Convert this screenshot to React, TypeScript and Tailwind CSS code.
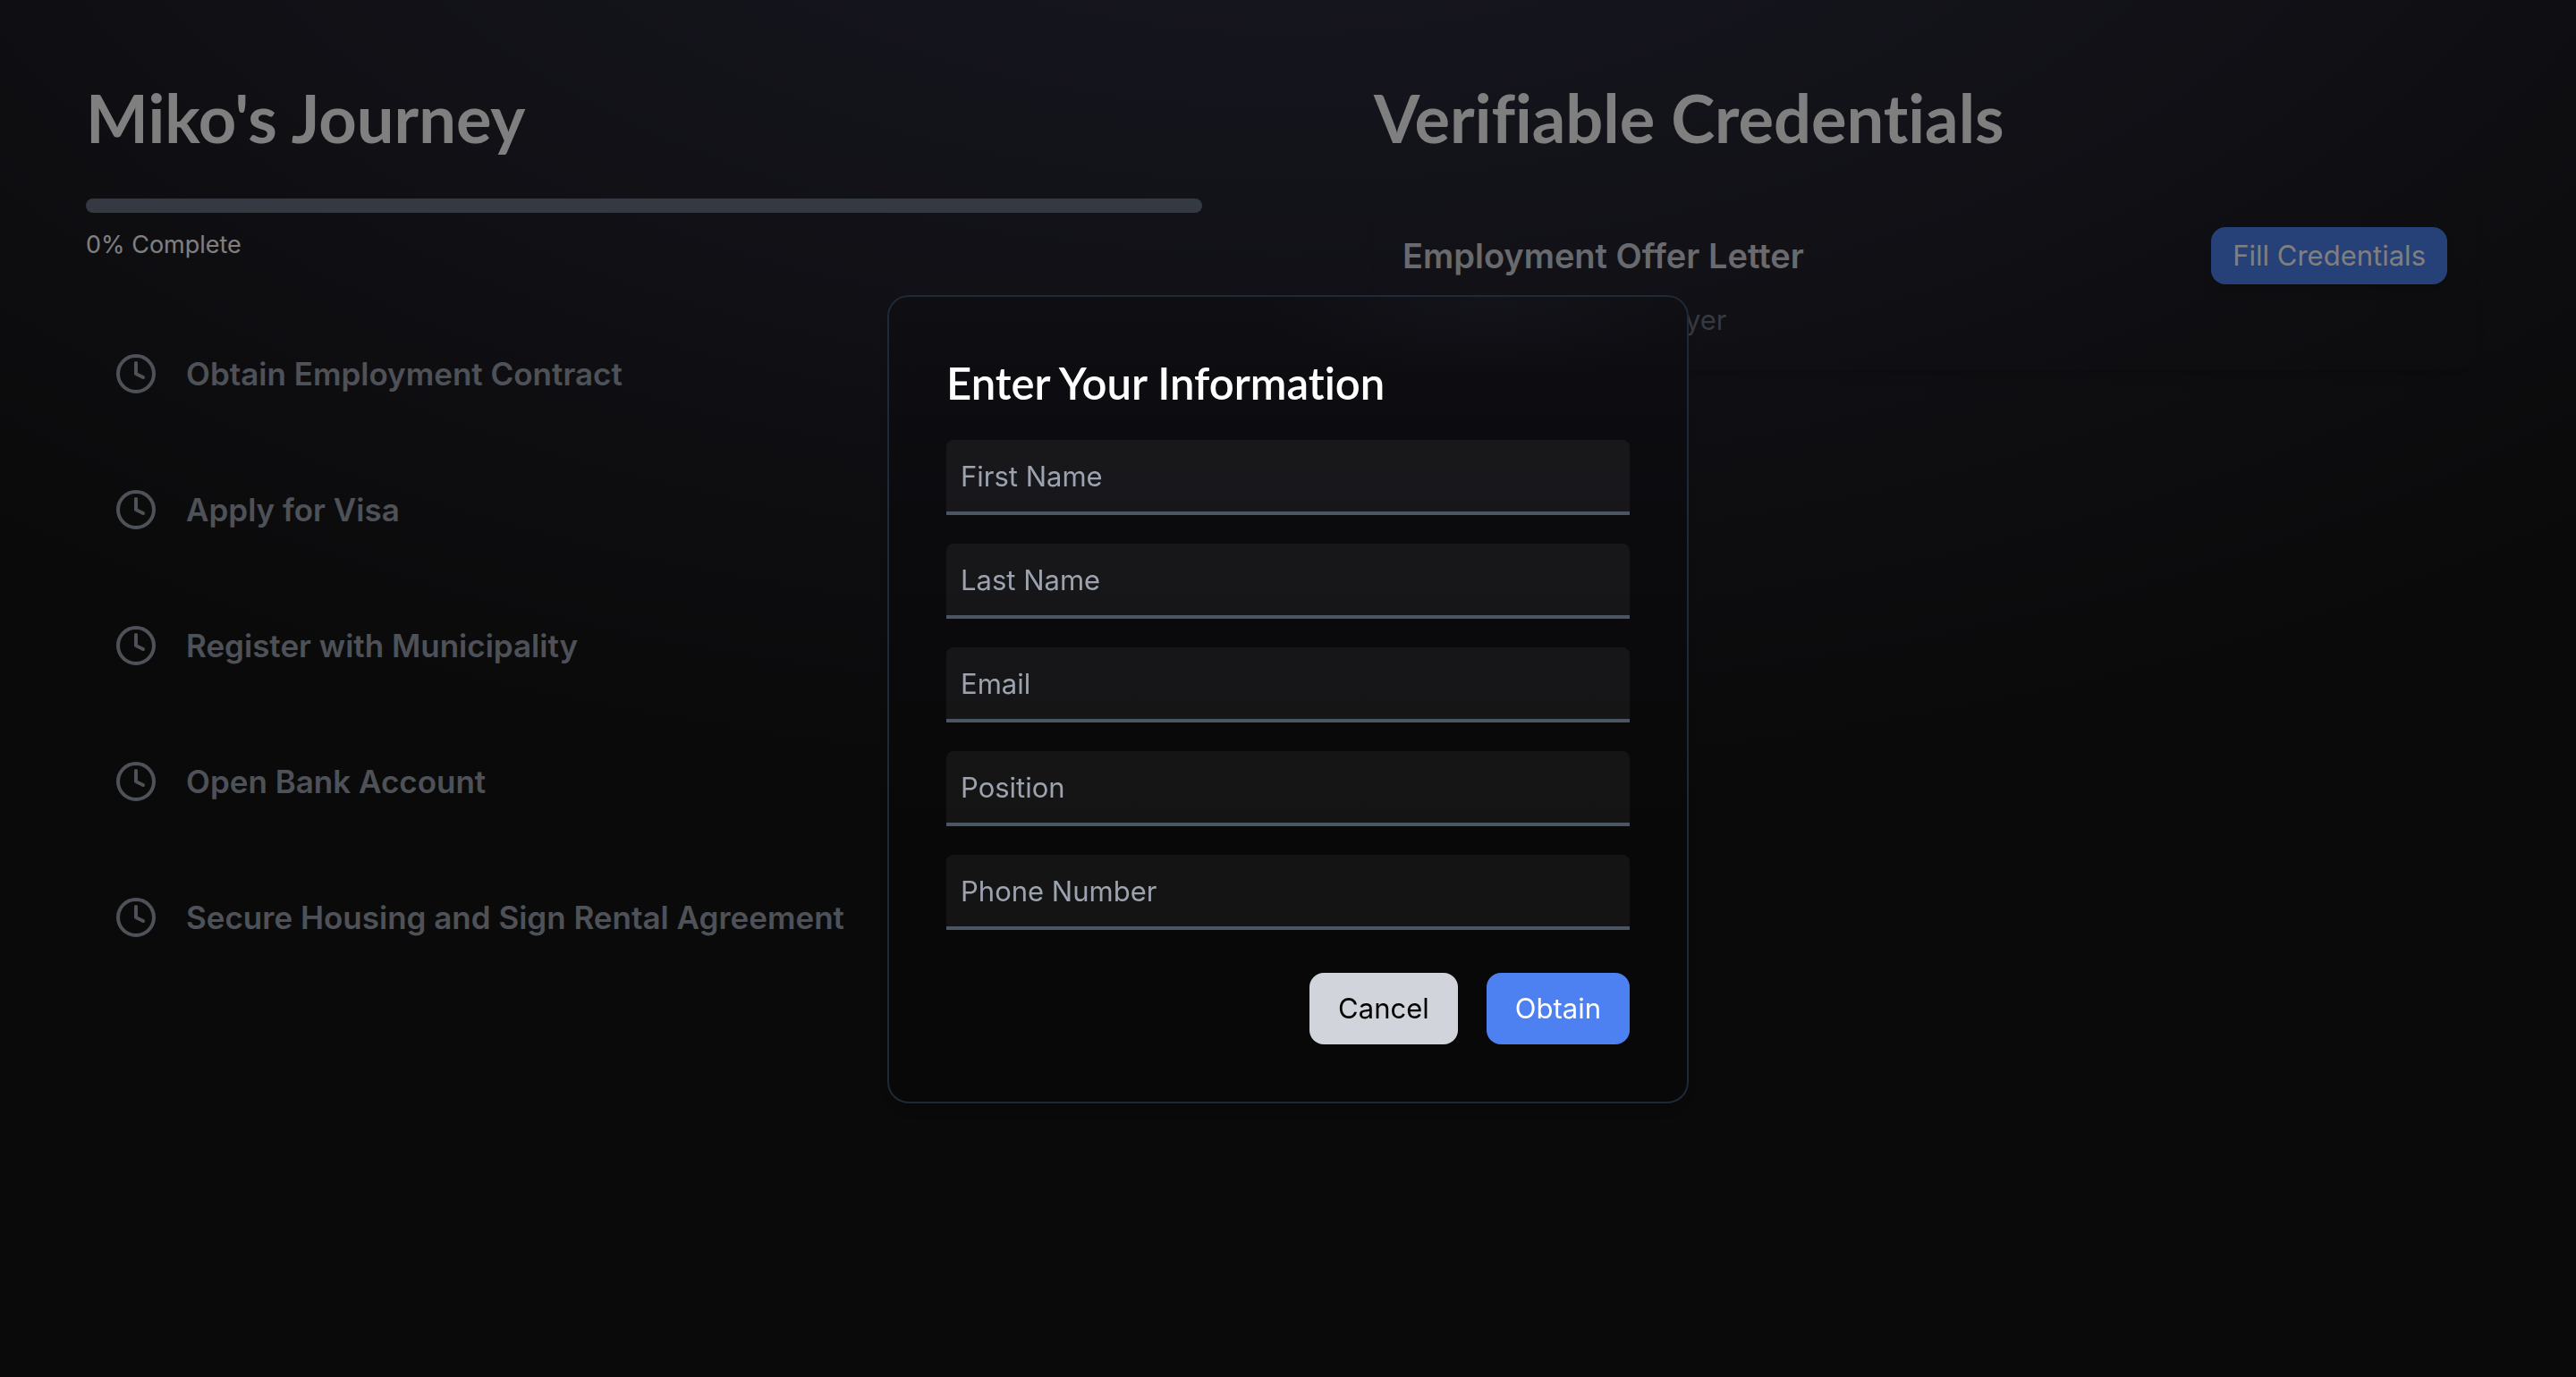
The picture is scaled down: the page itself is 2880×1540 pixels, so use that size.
import { Clock } from 'lucide-react'

const steps = [
  'Obtain Employment Contract',
  'Apply for Visa',
  'Register with Municipality',
  'Open Bank Account',
  'Secure Housing and Sign Rental Agreement',
]

const fields = [
  { id: 'firstName', label: 'First Name', type: 'text' },
  { id: 'lastName', label: 'Last Name', type: 'text' },
  { id: 'email', label: 'Email', type: 'email' },
  { id: 'position', label: 'Position', type: 'text' },
  { id: 'phone', label: 'Phone Number', type: 'tel' },
]

const progress = 0

const PageTitle = ({ children }: { children: string }) => (
  <h1 className="font-['Lato',sans-serif] text-[74px] leading-[72px] font-bold text-white [font-variant-ligatures:none]">
    {children}
  </h1>
)

const Journey = () => (
  <section className="p-24">
    <PageTitle>Miko's Journey</PageTitle>
    <div className="mt-[54px] h-4 overflow-hidden rounded-full bg-gray-500">
      <div className="h-full bg-[#4d80f0]" style={{ width: `${progress}%` }} />
    </div>
    <p className="mt-4 text-[27px] leading-10 text-white">{progress}% Complete</p>
    <ul className="mt-12 grid">
      {steps.map((step) => (
        <li key={step} className="flex h-[152px] items-center gap-8 px-8 text-[#9ca3af]">
          <Clock className="size-12 shrink-0" />
          <span className="text-[35px] leading-[56px] font-semibold">{step}</span>
        </li>
      ))}
    </ul>
  </section>
)

const Credentials = () => (
  <section className="p-24">
    <PageTitle>Verifiable Credentials</PageTitle>
    <div className="mt-[54px] mr-4 rounded-3xl p-8 shadow-lg">
      <div className="flex items-center justify-between">
        <h2 className="text-[38px] leading-[56px] font-semibold text-[#d1d5db]">Employment Offer Letter</h2>
        <button type="button" className="h-16 rounded-2xl bg-[#4d80f0] px-6 text-[31px] text-white shadow-lg">
          Fill Credentials
        </button>
      </div>
      <p className="mt-4 text-[31px] leading-[48px] text-gray-500">Issued by Your Employer</p>
    </div>
  </section>
)

const InfoDialog = () => (
  <div className="fixed inset-0 flex items-center justify-center bg-black/50 pt-6">
    <form
      role="dialog"
      aria-labelledby="dialog-title"
      className="w-full max-w-4xl rounded-3xl border-2 border-[#1f2937] bg-[#080808] bg-[radial-gradient(ellipse_30%_10%_at_75%_0%,rgba(120,130,150,0.05),transparent),linear-gradient(#0e0e13,#0b0b0e_30%,#080808_70%)] p-16 shadow-lg"
    >
      <h2
        id="dialog-title"
        className="mb-8 font-['Lato',sans-serif] text-[49px] leading-[64px] font-semibold text-white [font-variant-ligatures:none]"
      >
        Enter Your Information
      </h2>
      <div className="grid gap-8">
        {fields.map(({ id, label, type }) => (
          <input
            key={id}
            id={id}
            type={type}
            placeholder={label}
            aria-label={label}
            className="h-[84px] w-full rounded-t-lg border-b-4 border-[#4b5563] bg-white/5 px-4 text-[31px] text-white outline-none placeholder:text-[#9ca3af]"
          />
        ))}
      </div>
      <div className="mt-12 flex justify-end gap-8">
        <button type="button" className="h-20 rounded-2xl bg-[#d1d5db] px-8 text-[31px] text-black">
          Cancel
        </button>
        <button type="button" className="h-20 rounded-2xl bg-[#4d80f0] px-8 text-[31px] text-white">
          Obtain
        </button>
      </div>
    </form>
  </div>
)

export default function App() {
  return (
    <main className="min-h-screen bg-[#141414] bg-[radial-gradient(ellipse_80%_80%_at_50%_-20%,rgba(120,119,198,0.3),transparent)] font-['Inter',sans-serif]">
      <div className="grid grid-cols-2">
        <Journey />
        <Credentials />
      </div>
      <InfoDialog />
    </main>
  )
}
